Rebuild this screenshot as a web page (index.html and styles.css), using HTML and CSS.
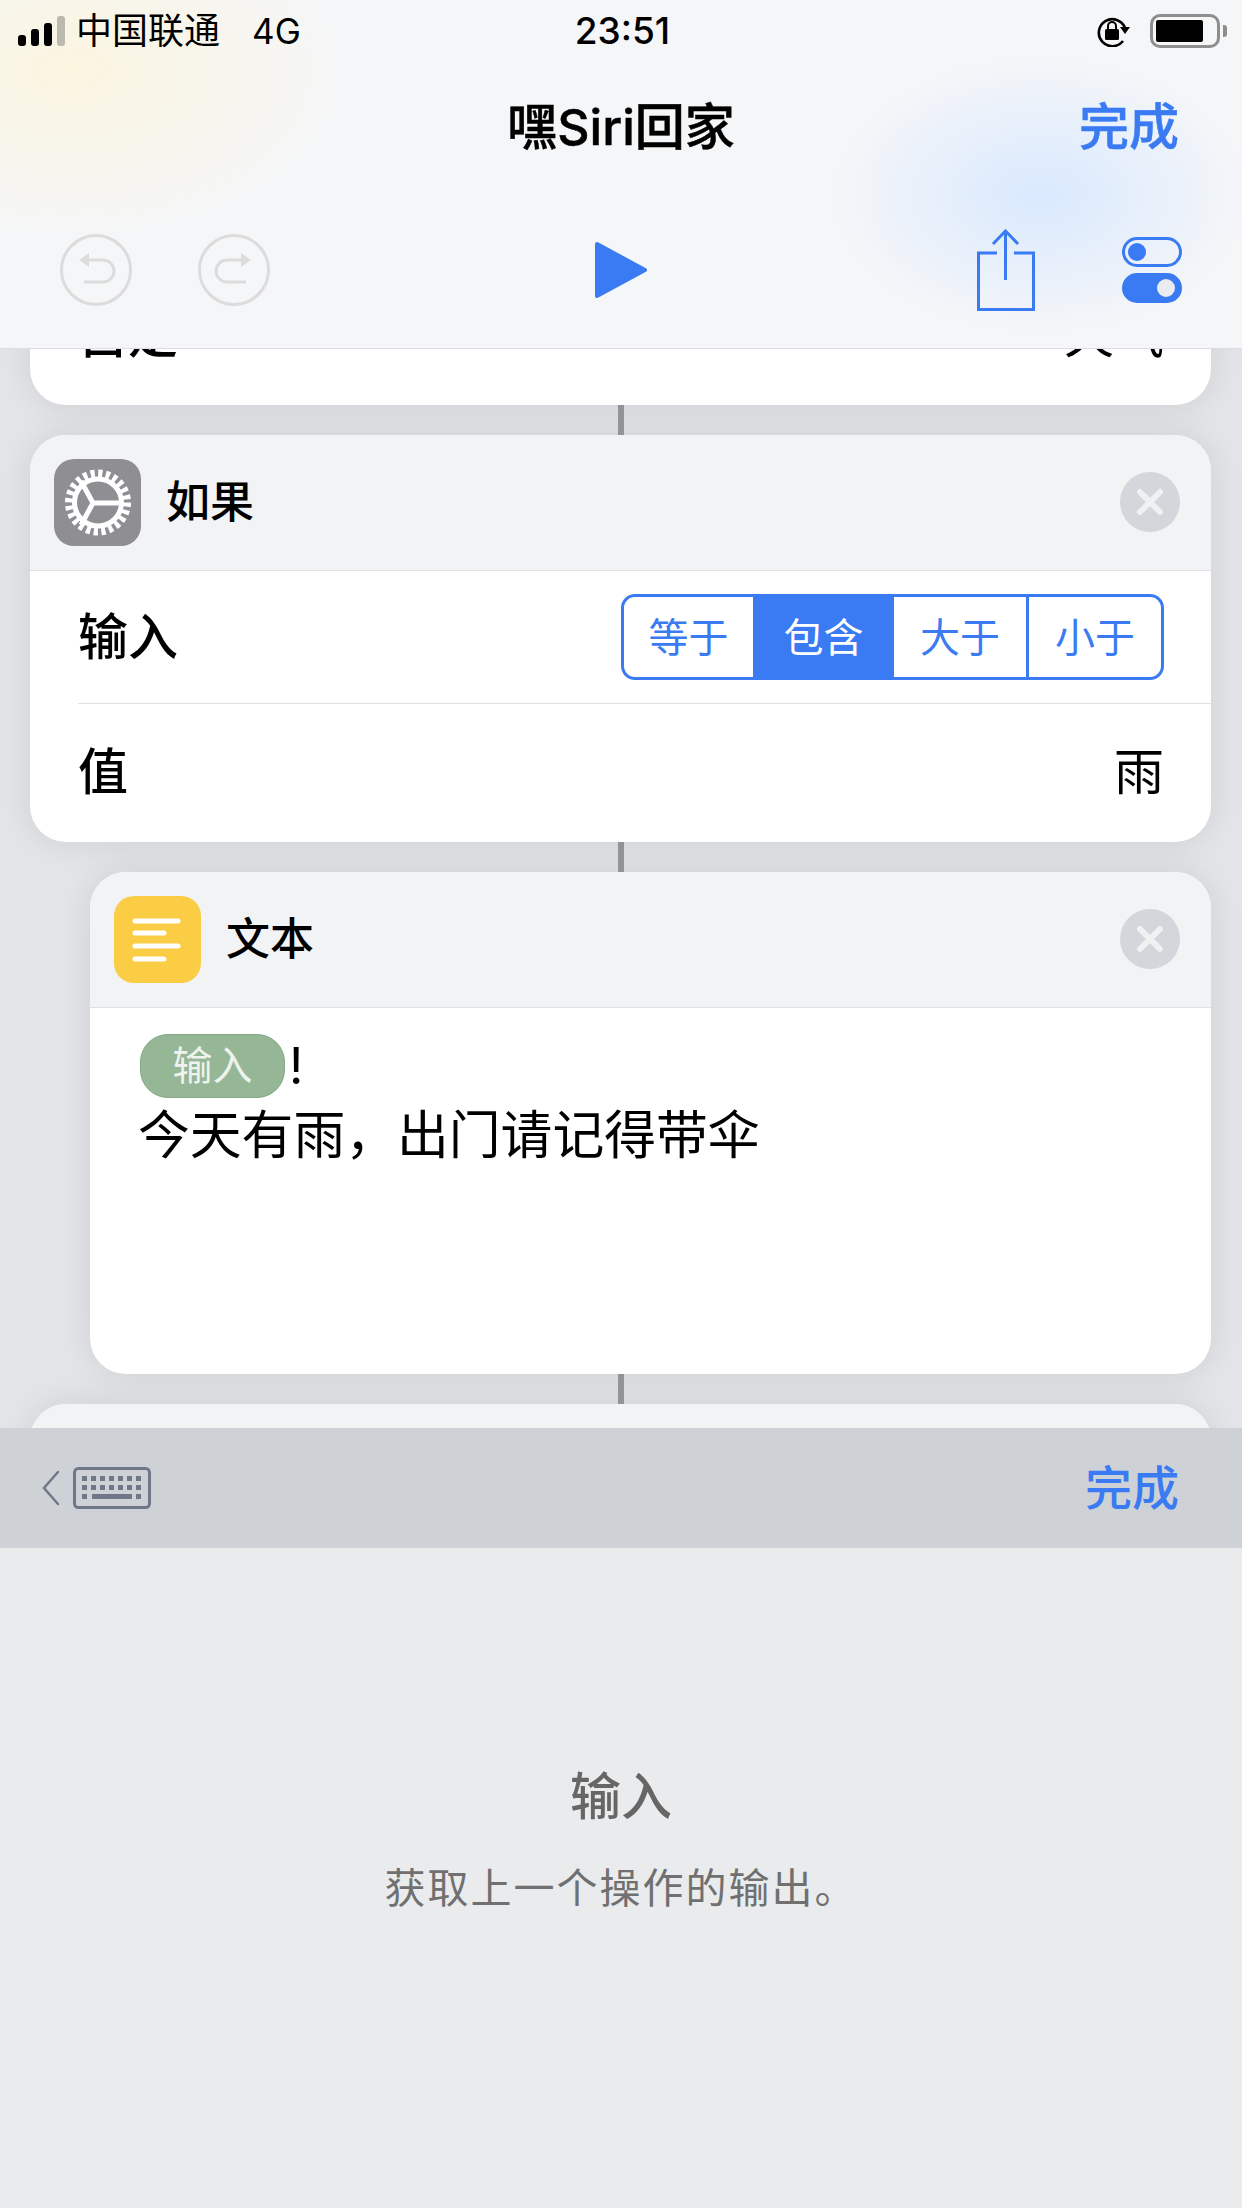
FILE: index.html
```html
<!DOCTYPE html>
<html lang="zh-CN">
<head>
  <meta charset="UTF-8">
  <meta name="viewport" content="width=device-width, initial-scale=1.0">
  <title>嘿Siri回家</title>
  <link rel="stylesheet" href="styles.css">
</head>
<body>
  <header class="topbar">
    <div class="status">
      <div class="status-left">
        <div class="signal"><i></i><i></i><i></i><i class="off"></i></div>
        <span class="carrier">中国联通</span>
        <span class="net">4G</span>
      </div>
      <div class="clock">23:51</div>
      <div class="status-right">
        <svg class="rot-lock" width="36" height="32" viewBox="0 0 36 32">
          <path d="M27 26a13.500 13.500 0 1 1 2-13" fill="none" stroke="#000" stroke-width="2.600"/>
          <path d="M24 12h10l-5 7z" fill="#000"/>
          <rect x="9" y="14" width="14" height="11" rx="1.500" fill="#000"/>
          <path d="M12 14v-3a4 4 0 0 1 8 0v3" fill="none" stroke="#000" stroke-width="2"/>
        </svg>
        <div class="battery"><div class="battery-fill"></div></div>
        <div class="battery-nub"></div>
      </div>
    </div>

    <div class="nav">
      <span></span>
      <div class="nav-title">嘿Siri回家</div>
      <a class="nav-done">完成</a>
    </div>

    <div class="tools">
      <div class="tools-left">
        <svg width="72" height="72" viewBox="0 0 72 72" class="round-btn">
          <circle cx="36" cy="36" r="34.500"/>
          <path d="M24 26H43a11 11 0 0 1 0 22H24"/>
          <path class="head" d="M19 26l10-7v14z"/>
        </svg>
        <svg width="72" height="72" viewBox="0 0 72 72" class="round-btn">
          <circle cx="36" cy="36" r="34.500"/>
          <path d="M48 26H29a11 11 0 0 0 0 22H48"/>
          <path class="head" d="M53 26l-10-7v14z"/>
        </svg>
      </div>
      <svg class="play" width="54" height="58" viewBox="0 0 54 58">
        <path d="M3 3L51 29L3 55z" fill="#3a7af3" stroke="#3a7af3" stroke-width="4" stroke-linejoin="round"/>
      </svg>
      <div class="tools-right">
        <svg width="58" height="82" viewBox="0 0 58 82" fill="none" stroke="#3a7af3" stroke-width="3">
          <path d="M20 24H1.500V80.500H56.500V24H37"/>
          <path d="M28.500 2V51"/>
          <path d="M16 15L28.500 2L41 15"/>
        </svg>
        <div class="toggles">
          <div class="toggle"><b></b></div>
          <div class="toggle on"><b></b></div>
        </div>
      </div>
    </div>
  </header>

  <main class="flow">
    <section class="card first">
      <div class="row last"><span class="label">自定</span><span class="value">天气</span></div>
    </section>
    <div class="wire"></div>

    <section class="card">
      <div class="card-head">
        <div class="app-icon gray">
          <svg width="87" height="87" viewBox="0 0 87 87" fill="none" stroke="#fff">
            <circle cx="44" cy="43.500" r="29" stroke-width="8" stroke-dasharray="4.200 3.390"/>
            <circle cx="44" cy="43.500" r="23.500" stroke-width="5"/>
            <path d="M39 44L27 22M39 44L27 66M39 44H66" stroke-width="5"/>
          </svg>
        </div>
        <div class="card-title">如果</div>
        <div class="close"><svg width="60" height="60" viewBox="0 0 60 60"><path d="M20 20L40 40M40 20L20 40"/></svg></div>
      </div>
      <div class="row">
        <span class="label">输入</span>
        <div class="segments">
          <span class="seg s1">等于</span>
          <span class="seg s2 active">包含</span>
          <span class="seg s3">大于</span>
          <span class="seg s4">小于</span>
        </div>
      </div>
      <div class="row last">
        <span class="label">值</span>
        <span class="value">雨</span>
      </div>
    </section>
    <div class="wire"></div>

    <section class="card nested">
      <div class="card-head">
        <div class="app-icon yellow">
          <svg width="87" height="87" viewBox="0 0 87 87" fill="none" stroke="#fff" stroke-width="5" stroke-linecap="round">
            <path d="M21 25H64M21 37H50M21 50H64M21 63H50"/>
          </svg>
        </div>
        <div class="card-title">文本</div>
        <div class="close"><svg width="60" height="60" viewBox="0 0 60 60"><path d="M20 20L40 40M40 20L20 40"/></svg></div>
      </div>
      <div class="text-body">
        <div class="text-line"><span class="token">输入</span><span class="bang">!</span></div>
        <div class="text-msg">今天有雨，出门请记得带伞</div>
      </div>
    </section>
    <div class="wire"></div>

    <section class="card next">
      <div class="card-head"></div>
    </section>
  </main>

  <div class="kb-bar">
    <div class="kb-left">
      <svg width="18" height="36" viewBox="0 0 18 36" fill="none" stroke="#6f7789" stroke-width="2.500" stroke-linecap="round">
        <path d="M16 2L2 18L16 34"/>
      </svg>
      <svg width="78" height="42" viewBox="0 0 78 42" fill="none" stroke="#6f7789">
        <rect x="1.500" y="1.500" width="75" height="39" rx="4" stroke-width="3"/>
        <path d="M9 11.500H68M9 20.500H68" stroke-width="5" stroke-dasharray="5 4"/>
        <path d="M9 29.500H14M19 29.500H59M63 29.500H68" stroke-width="5"/>
      </svg>
    </div>
    <a class="kb-done">完成</a>
  </div>

  <div class="help">
    <div class="help-title">输入</div>
    <div class="help-text">获取上一个操作的输出。</div>
  </div>
</body>
</html>
```

FILE: styles.css
```css
* {
  box-sizing: border-box;
}

body {
  margin: 0;
  width: 1242px;
  height: 2208px;
  overflow: hidden;
  background-color: #e9ebed;
  color: #000;
  font-family: Inter, "Noto Sans CJK SC", sans-serif;
}

/* top bar: status + title + tools */
.topbar {
  height: 349px;
  border-bottom: 1px solid #dcdde0;
  background-color: #f5f6f8;
  background-image:
    radial-gradient(ellipse 280px 170px at 70px 70px, #fbf5e0 0%, rgba(251, 245, 224, 0.6) 40%, rgba(251, 245, 224, 0) 100%),
    radial-gradient(ellipse 210px 140px at 1040px 195px, #d9e9fe 0%, rgba(217, 233, 254, 0.55) 45%, rgba(217, 233, 254, 0) 100%);
}

.status {
  height: 62px;
  padding: 0 15px 0 18px;
  display: grid;
  grid-template-columns: 1fr auto 1fr;
  align-items: center;
}

.status-left {
  display: flex;
  align-items: center;
}

.signal {
  display: flex;
  align-items: flex-end;
  gap: 5px;
  height: 30px;
  margin-right: 11px;
}

.signal i {
  width: 8px;
  border-radius: 3px;
  background-color: #000;
}

.signal i:nth-child(1) { height: 11px; }
.signal i:nth-child(2) { height: 17px; }
.signal i:nth-child(3) { height: 23px; }
.signal i.off { height: 30px; background-color: #bcb9ae; }

.carrier {
  font-size: 36px;
  line-height: 44px;
}

.net {
  margin-left: 32px;
  font-size: 35px;
  line-height: 44px;
}

.clock {
  font-size: 37px;
  font-weight: 500;
  line-height: 44px;
}

.status-right {
  display: flex;
  align-items: center;
  justify-content: flex-end;
}

.rot-lock {
  margin-right: 18px;
}

.battery {
  width: 70px;
  height: 34px;
  padding: 3px;
  border: 3px solid #8e8e8e;
  border-radius: 10px;
}

.battery-fill {
  width: 47px;
  height: 22px;
  border-radius: 2px;
  background-color: #000;
}

.battery-nub {
  width: 4px;
  height: 12px;
  margin-left: 3px;
  border-radius: 0 3px 3px 0;
  background-color: #8e8e8e;
}

.nav {
  height: 130px;
  display: grid;
  grid-template-columns: 1fr auto 1fr;
  align-items: center;
}

.nav-title {
  font-size: 50px;
  font-weight: 500;
  line-height: 60px;
  -webkit-text-stroke: 0.5px #000;
}

.nav-done {
  justify-self: end;
  margin-right: 63px;
  font-size: 50px;
  font-weight: 500;
  line-height: 60px;
  color: #3a7af3;
  -webkit-text-stroke: 0.5px #3a7af3;
}

.tools {
  height: 156px;
  padding: 0 60px;
  display: grid;
  grid-template-columns: 1fr auto 1fr;
  align-items: center;
}

.tools-left {
  display: flex;
  gap: 66px;
}

.round-btn {
  fill: none;
  stroke: #dcdcdc;
  stroke-width: 3;
}

.round-btn .head {
  fill: #dcdcdc;
  stroke: none;
}

.play {
  display: block;
}

.tools-right {
  display: flex;
  align-items: center;
  justify-content: flex-end;
  gap: 87px;
}

.toggles {
  display: flex;
  flex-direction: column;
  gap: 6px;
}

.toggle {
  width: 60px;
  height: 30px;
  padding-left: 3px;
  border: 3px solid #3a7af3;
  border-radius: 15px;
  display: flex;
  align-items: center;
}

.toggle b {
  width: 18px;
  height: 18px;
  border-radius: 50%;
  background-color: #3a7af3;
}

.toggle.on {
  justify-content: flex-end;
  padding: 0 4px 0 0;
  background-color: #3a7af3;
}

.toggle.on b {
  background-color: #e9ecf0;
}

/* the workflow */
.flow {
  height: 1079px;
  overflow: hidden;
  background-color: #e3e5e8;
}

.card {
  margin: 0 31px 0 30px;
  border-radius: 36px;
  overflow: hidden;
  background-color: #fff;
  box-shadow: 0 0 36px rgba(0, 0, 0, 0.1);
}

.card.first {
  margin-top: -83px;
}

.card.nested {
  margin-left: 90px;
  height: 502px;
}

.card.next {
  height: 200px;
}

.wire {
  width: 6px;
  height: 30px;
  margin: 0 auto;
  background-color: #929397;
  position: relative;
}

.card-head {
  height: 136px;
  padding: 0 31px 1px 24px;
  border-bottom: 1px solid #e0e1e4;
  background-color: #f1f3f5;
  display: flex;
  align-items: center;
}

.card-head .close {
  margin-left: auto;
}

.app-icon {
  width: 87px;
  height: 87px;
  border-radius: 20px;
}

.app-icon svg {
  display: block;
}

.app-icon.gray {
  background-color: #8e8e93;
}

.app-icon.yellow {
  background-color: #fbcd44;
}

.card-title {
  margin-left: 25px;
  font-size: 44px;
  font-weight: 500;
  line-height: 56px;
}

.close {
  width: 60px;
  height: 60px;
  border-radius: 50%;
  background-color: #d3d6da;
}

.close svg {
  display: block;
  fill: none;
  stroke: #eff1f3;
  stroke-width: 6;
  stroke-linecap: round;
}

.row {
  height: 133px;
  margin-left: 48px;
  padding-right: 47px;
  border-bottom: 1px solid #e0e1e4;
  display: flex;
  align-items: center;
  justify-content: space-between;
}

.row.last {
  height: 138px;
  padding-bottom: 2px;
  border-bottom: none;
}

.first .row.last {
  height: 139px;
}

.label {
  font-size: 50px;
  font-weight: 500;
  line-height: 60px;
}

.value {
  font-size: 50px;
  line-height: 60px;
}

.segments {
  width: 543px;
  height: 86px;
  border: 3px solid #3a7af3;
  border-radius: 14px;
  overflow: hidden;
  display: flex;
}

.seg {
  padding-bottom: 5px;
  display: flex;
  align-items: center;
  justify-content: center;
  font-size: 40px;
  color: #3a7af3;
}

.s1 { width: 129px; }
.s2 { width: 141px; }
.s3 { width: 132px; }

.s4 {
  flex: 1;
  border-left: 3px solid #3a7af3;
}

.seg.active {
  background-color: #3a7af3;
  color: #fff;
}

.text-body {
  padding: 26px 0 0 50px;
}

.text-line {
  height: 64px;
  display: flex;
  align-items: center;
}

.token {
  width: 145px;
  height: 64px;
  border: 1px solid #85a886;
  border-radius: 28px;
  background-color: #95b796;
  color: #eef3ee;
  font-size: 40px;
  line-height: 62px;
  text-align: center;
}

.bang {
  margin-left: 4px;
  font-size: 50px;
  line-height: 60px;
}

.text-msg {
  margin-top: 11px;
  margin-left: -2px;
  font-size: 51.800px;
  line-height: 52px;
  white-space: nowrap;
}

/* keyboard accessory bar */
.kb-bar {
  height: 120px;
  padding: 0 63px 0 42px;
  background-color: #ced1d6;
  display: flex;
  align-items: center;
  justify-content: space-between;
}

.kb-left {
  display: flex;
  align-items: center;
  gap: 13px;
}

.kb-left svg {
  display: block;
}

.kb-done {
  font-size: 47px;
  font-weight: 500;
  line-height: 60px;
  color: #3a7af3;
}

/* description under the bar */
.help {
  height: 660px;
  padding-top: 224px;
  text-align: center;
}

.help-title {
  font-size: 51px;
  font-weight: 500;
  line-height: 50px;
  color: #666;
}

.help-text {
  margin-top: 41px;
  font-size: 41px;
  line-height: 50px;
  letter-spacing: 2px;
  color: #707070;
}
```
